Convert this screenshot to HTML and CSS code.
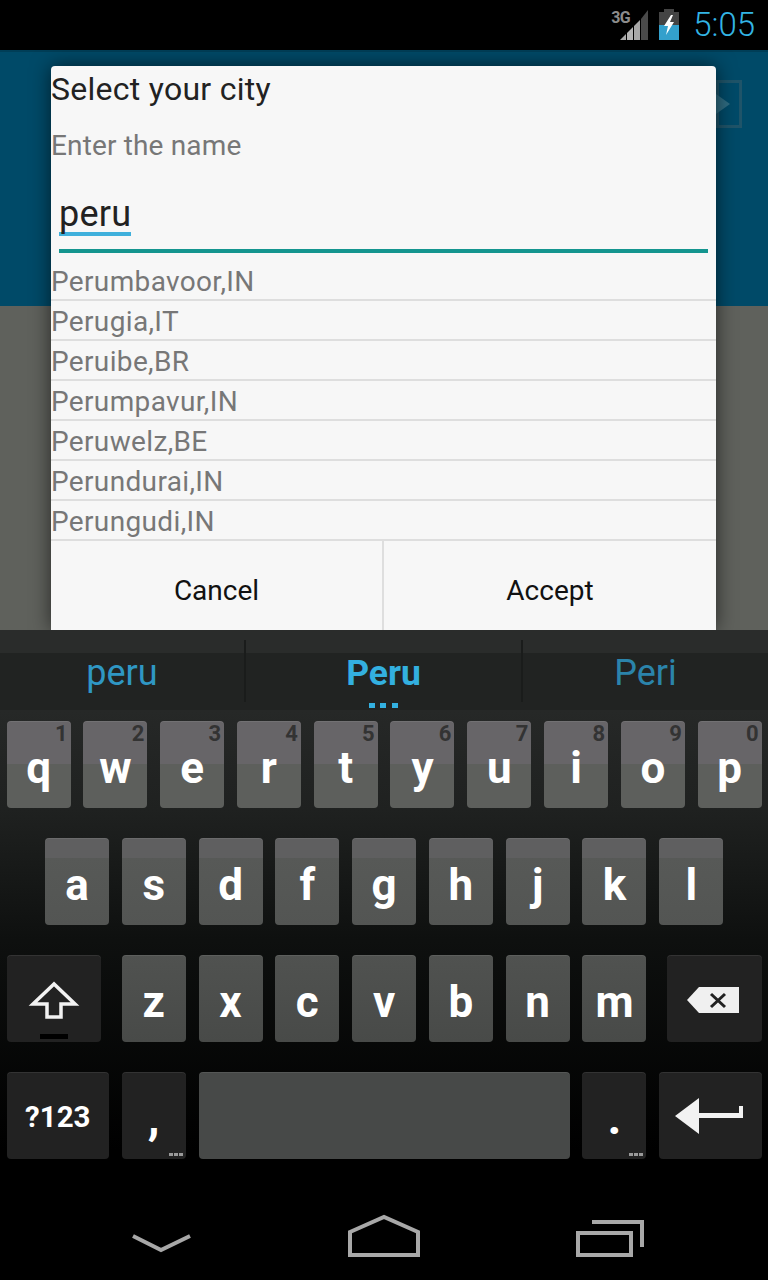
FILE: index.html
```html
<!DOCTYPE html>
<html lang="en">
<head>
  <meta charset="UTF-8">
  <title>Select your city</title>
  <link rel="stylesheet" href="styles.css">
</head>
<body>
  <div class="status-bar">
    <span class="net-type">3G</span>
    <svg class="signal" width="28" height="32" viewBox="0 0 28 32">
      <polygon points="0,31 6,25 6,31" fill="#a8a8a8"/>
      <polygon points="7,24 13,18 13,31 7,31" fill="#b4b4b4"/>
      <polygon points="14,17 20,11 20,31 14,31" fill="#a8a8a8"/>
      <polygon points="21,10 28,1 28,31 21,31" fill="#4a4a4a"/>
    </svg>
    <svg class="battery" width="20" height="32" viewBox="0 0 20 32">
      <path d="M5 0h10v3h5v13H0V3h5z" fill="#444"/>
      <rect x="0" y="16" width="20" height="15" fill="#33a0cc"/>
      <polygon points="12,6 5,17 9,17 7,26 15,13 11,13 14,6" fill="#fff"/>
    </svg>
    <span class="clock">5:05</span>
  </div>

  <div class="app">
    <div class="app-header">
      <svg class="header-icon" width="26" height="48" viewBox="0 0 26 48">
        <rect x="1.5" y="1.5" width="23" height="45" fill="none" stroke="#1f5469" stroke-width="3"/>
        <polygon points="0,14 14,24 0,34" fill="#2f6b80"/>
      </svg>
    </div>
    <div class="app-body"></div>

    <div class="dialog">
      <div class="dialog-title">Select your city</div>
      <div class="dialog-hint">Enter the name</div>
      <div class="city-input"><span class="typed">peru</span></div>
      <div class="city-list">
        <div class="city">Perumbavoor,IN</div>
        <div class="city">Perugia,IT</div>
        <div class="city">Peruibe,BR</div>
        <div class="city">Perumpavur,IN</div>
        <div class="city">Peruwelz,BE</div>
        <div class="city">Perundurai,IN</div>
        <div class="city">Perungudi,IN</div>
      </div>
      <div class="dialog-buttons">
        <div class="dialog-btn">Cancel</div>
        <div class="dialog-btn">Accept</div>
      </div>
    </div>
  </div>

  <div class="keyboard">
    <div class="suggestions">
      <div class="suggestion">peru</div>
      <div class="suggestion main-suggestion">Peru<span class="more-dots"></span></div>
      <div class="suggestion dim">Peri</div>
    </div>

    <div class="keys">
      <div class="key row1 w2">q<span class="hint">1</span></div>
      <div class="key row1 w2">w<span class="hint">2</span></div>
      <div class="key row1 w2">e<span class="hint">3</span></div>
      <div class="key row1 w2">r<span class="hint">4</span></div>
      <div class="key row1 w2">t<span class="hint">5</span></div>
      <div class="key row1 w2">y<span class="hint">6</span></div>
      <div class="key row1 w2">u<span class="hint">7</span></div>
      <div class="key row1 w2">i<span class="hint">8</span></div>
      <div class="key row1 w2">o<span class="hint">9</span></div>
      <div class="key row1 w2">p<span class="hint">0</span></div>

      <div class="key row2 w2 first-a">a</div>
      <div class="key row2 w2">s</div>
      <div class="key row2 w2">d</div>
      <div class="key row2 w2">f</div>
      <div class="key row2 w2">g</div>
      <div class="key row2 w2">h</div>
      <div class="key row2 w2">j</div>
      <div class="key row2 w2">k</div>
      <div class="key row2 w2">l</div>

      <div class="key dark w3 shift">
        <svg width="52" height="40" viewBox="0 0 52 40">
          <polygon points="26,4 5,24 19,24 19,37 33,37 33,24 47,24" fill="none" stroke="#f2f2f2" stroke-width="3.5"/>
        </svg>
        <span class="shift-bar"></span>
      </div>
      <div class="key row3 w2">z</div>
      <div class="key row3 w2">x</div>
      <div class="key row3 w2">c</div>
      <div class="key row3 w2">v</div>
      <div class="key row3 w2">b</div>
      <div class="key row3 w2">n</div>
      <div class="key row3 w2">m</div>
      <div class="key dark w3 del">
        <svg width="52" height="26" viewBox="0 0 52 26">
          <polygon points="0,13 12,0 52,0 52,26 12,26" fill="#f0f0f0"/>
          <path d="M24 7l14 13M38 7L24 20" stroke="#222" stroke-width="3" fill="none"/>
        </svg>
      </div>

      <div class="key dark w3 sym">?123</div>
      <div class="key dark w2 punct">,<span class="key-dots"></span></div>
      <div class="key row4 w10"></div>
      <div class="key dark w2 punct">.<span class="key-dots"></span></div>
      <div class="key dark w3 enter">
        <svg width="68" height="36" viewBox="0 0 68 36">
          <polygon points="0,18 24,0 24,15 64,15 64,8 68,8 68,20 24,20 24,36" fill="#f2f2f2"/>
        </svg>
      </div>
    </div>
  </div>

  <div class="nav-bar">
    <svg width="768" height="90" viewBox="0 0 768 90">
      <g fill="none" stroke="#a8a8a8" stroke-width="4">
        <polyline points="133,46 161,60 190,46"/>
        <polygon points="350,42 384,27 418,42 418,65 350,65"/>
        <rect x="578" y="43" width="53" height="22"/>
        <polyline points="592,32 642,32 642,57"/>
      </g>
    </svg>
  </div>
</body>
</html>
```

FILE: styles.css
```css
* {
  box-sizing: border-box;
}
body {
  margin: 0;
  width: 768px;
  height: 1280px;
  overflow: hidden;
  background: #000;
  font-family: Roboto, Arial, sans-serif;
  display: flex;
  flex-direction: column;
}

/* status bar */
.status-bar {
  height: 50px;
  background: #000;
  display: flex;
  align-items: flex-start;
  justify-content: flex-end;
  padding-right: 13px;
}
.net-type {
  font-size: 16px;
  font-weight: 700;
  color: #8c8c8c;
  margin-top: 8px;
  width: 20px;
  letter-spacing: -0.5px;
  margin-right: -11px;
}
.signal {
  margin-top: 9px;
  margin-right: 11px;
}
.battery {
  margin-top: 9px;
  margin-right: 14px;
}
.clock {
  font-size: 33px;
  font-weight: 300;
  line-height: 50px;
  color: #33b5e5;
}

/* app behind the dialog */
.app {
  position: relative;
  height: 580px;
  display: flex;
  flex-direction: column;
}
.app-header {
  height: 256px;
  background: #004a68;
  border-top: 2px solid #003e57;
  padding: 28px 26px 0 0;
  display: flex;
  justify-content: flex-end;
  align-items: flex-start;
}
.app-body {
  flex: 1;
  background: #5f615c;
}

/* dialog */
.dialog {
  position: absolute;
  left: 51px;
  top: 16px;
  width: 665px;
  height: 564px;
  background: #f7f7f7;
  border-radius: 4px 4px 0 0;
  box-shadow: 0 0 20px rgba(0, 0, 0, 0.6);
  display: flex;
  flex-direction: column;
}
.dialog-title {
  font-size: 32px;
  line-height: 44px;
  letter-spacing: 0.27px;
  color: #222;
  margin-top: 1px;
}
.dialog-hint {
  font-size: 28px;
  line-height: 40px;
  letter-spacing: 0.15px;
  color: #777;
  margin-top: 15px;
}
.city-input {
  margin: 26px 8px 0;
  height: 61px;
  border-bottom: 4px solid #14958f;
}
.typed {
  display: inline-block;
  font-size: 36px;
  line-height: 44px;
  letter-spacing: 0.25px;
  color: #222;
  border-bottom: 4px solid #3fb0dc;
  height: 44px;
}
.city-list {
  margin-top: 8px;
}
.city {
  height: 40px;
  border-bottom: 2px solid #dedede;
  font-size: 28px;
  line-height: 42px;
  letter-spacing: 0.35px;
  color: #777;
}
.dialog-buttons {
  flex: 1;
  display: flex;
}
.dialog-btn {
  flex: 1;
  display: flex;
  align-items: center;
  justify-content: center;
  font-size: 28px;
  color: #111;
  padding-top: 10px;
}
.dialog-btn:first-child {
  flex: 0 0 333px;
  border-right: 2px solid #dedede;
}

/* keyboard */
.keyboard {
  position: relative;
  height: 560px;
  background: linear-gradient(#262827 80px, #1f2120 180px, #0e100f 310px, #000 520px);
}
.suggestions {
  height: 80px;
  background: linear-gradient(#2a2c2b 23px, #212322 23px);
  padding-top: 10px;
  display: grid;
  grid-template-columns: 246px 277px 245px;
}
.suggestion {
  position: relative;
  height: 62px;
  display: flex;
  align-items: center;
  justify-content: center;
  font-size: 36px;
  padding-top: 4px;
  color: #2f97c4;
  border-right: 2px solid #1a1c1b;
}
.main-suggestion {
  font-weight: 700;
  font-size: 35.5px;
  color: #33b0e0;
}
.suggestion.dim {
  border-right: none;
  color: #2b84ab;
}
.more-dots {
  position: absolute;
  left: 123px;
  top: 63px;
  width: 29px;
  height: 5px;
  background: repeating-linear-gradient(90deg, #33b0e0 0 6px, transparent 6px 11.5px);
}
.keys {
  margin-top: 11px;
  padding-left: 0.2px;
  display: grid;
  grid-template-columns: repeat(20, 38.4px);
  grid-auto-rows: 87px;
  row-gap: 30px;
}
.key {
  position: relative;
  margin: 0 6.4px;
  border-radius: 4px;
  display: flex;
  align-items: center;
  justify-content: center;
  font-size: 44px;
  font-weight: 700;
  color: #fff;
  box-shadow: inset 0 1px 0 rgba(255, 255, 255, 0.08);
  padding-top: 6px;
}
.w2 { grid-column: span 2; }
.w3 { grid-column: span 3; }
.w10 { grid-column: span 10; }
.first-a { grid-column: 2 / span 2; }
.row1 { background: linear-gradient(#676568 50%, #5d5f5c 50%); }
.row2 { background: linear-gradient(#5f5f60 23%, #575957 23%, #535553); }
.row3 { background: linear-gradient(#505250, #484a48); }
.row4 { background: #474948; }
.dark { background: #222; }
.shift {
  margin-right: 14px;
  padding-top: 3px;
  padding-bottom: 0;
}
.del {
  margin-left: 14px;
  padding-top: 2px;
  padding-right: 2px;
}
.sym {
  font-size: 29.5px;
  padding-top: 2px;
}
.enter {
  padding-top: 0;
  padding-right: 2px;
}
.punct {
  font-size: 48px;
  padding-top: 4px;
}
.hint {
  position: absolute;
  top: 0;
  right: 3px;
  font-size: 22px;
  line-height: 26px;
  font-weight: 700;
  color: #333;
}
.shift-bar {
  position: absolute;
  left: 33px;
  bottom: 3px;
  width: 28px;
  height: 5px;
  background: #000;
}
.key-dots {
  position: absolute;
  right: 3px;
  bottom: 3px;
  width: 14px;
  height: 3px;
  background: repeating-linear-gradient(90deg, #999 0 4px, transparent 4px 5px);
}

/* nav bar */
.nav-bar {
  height: 90px;
  background: #000;
}
.nav-bar svg {
  display: block;
}
```
